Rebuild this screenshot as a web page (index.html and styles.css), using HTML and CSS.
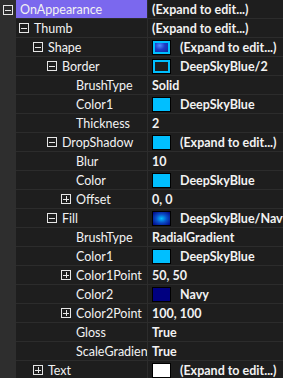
FILE: index.html
```html
<!DOCTYPE html>
<html lang="en">
<head>
  <meta charset="UTF-8" />
  <title>Property Grid</title>
  <link rel="stylesheet" href="styles.css">
</head>
<body>
  <div class="grid">
    <div class="row selected">
      <div class="gutter"><span class="toggle minus"></span></div>
      <div class="name l0">OnAppearance</div>
      <div class="value">(Expand to edit...)</div>
    </div>
    <div class="row">
      <div class="gutter"></div>
      <div class="name l1"><span class="toggle minus"></span>Thumb</div>
      <div class="value">(Expand to edit...)</div>
    </div>
    <div class="row">
      <div class="gutter"></div>
      <div class="name l2"><span class="toggle minus"></span>Shape</div>
      <div class="value"><span class="swatch shape"></span>(Expand to edit...)</div>
    </div>
    <div class="row">
      <div class="gutter"></div>
      <div class="name l3"><span class="toggle minus"></span>Border</div>
      <div class="value"><span class="swatch border"></span>DeepSkyBlue/2</div>
    </div>
    <div class="row">
      <div class="gutter"></div>
      <div class="name l4">BrushType</div>
      <div class="value">Solid</div>
    </div>
    <div class="row">
      <div class="gutter"></div>
      <div class="name l4">Color1</div>
      <div class="value"><span class="swatch sky"></span>DeepSkyBlue</div>
    </div>
    <div class="row">
      <div class="gutter"></div>
      <div class="name l4">Thickness</div>
      <div class="value">2</div>
    </div>
    <div class="row">
      <div class="gutter"></div>
      <div class="name l3"><span class="toggle minus"></span>DropShadow</div>
      <div class="value"><span class="swatch sky"></span>(Expand to edit...)</div>
    </div>
    <div class="row">
      <div class="gutter"></div>
      <div class="name l4">Blur</div>
      <div class="value">10</div>
    </div>
    <div class="row">
      <div class="gutter"></div>
      <div class="name l4">Color</div>
      <div class="value"><span class="swatch sky"></span>DeepSkyBlue</div>
    </div>
    <div class="row">
      <div class="gutter"></div>
      <div class="name l4"><span class="toggle plus"></span>Offset</div>
      <div class="value">0, 0</div>
    </div>
    <div class="row">
      <div class="gutter"></div>
      <div class="name l3"><span class="toggle minus"></span>Fill</div>
      <div class="value"><span class="swatch radial"></span>DeepSkyBlue/Navy</div>
    </div>
    <div class="row">
      <div class="gutter"></div>
      <div class="name l4">BrushType</div>
      <div class="value">RadialGradient</div>
    </div>
    <div class="row">
      <div class="gutter"></div>
      <div class="name l4">Color1</div>
      <div class="value"><span class="swatch sky"></span>DeepSkyBlue</div>
    </div>
    <div class="row">
      <div class="gutter"></div>
      <div class="name l4"><span class="toggle plus"></span>Color1Point</div>
      <div class="value">50, 50</div>
    </div>
    <div class="row">
      <div class="gutter"></div>
      <div class="name l4">Color2</div>
      <div class="value"><span class="swatch navy"></span>Navy</div>
    </div>
    <div class="row">
      <div class="gutter"></div>
      <div class="name l4"><span class="toggle plus"></span>Color2Point</div>
      <div class="value">100, 100</div>
    </div>
    <div class="row">
      <div class="gutter"></div>
      <div class="name l4">Gloss</div>
      <div class="value">True</div>
    </div>
    <div class="row">
      <div class="gutter"></div>
      <div class="name l4">ScaleGradient</div>
      <div class="value">True</div>
    </div>
    <div class="row">
      <div class="gutter"></div>
      <div class="name l2"><span class="toggle plus"></span>Text</div>
      <div class="value"><span class="swatch white"></span>(Expand to edit...)</div>
    </div>
  </div>
</body>
</html>
```

FILE: styles.css
```css
* {
  margin: 0;
  padding: 0;
  box-sizing: border-box;
}

body {
  font-family: 'Lato', 'Noto Sans', sans-serif;
  font-size: 12.5px;
  background: #1e1e1e;
  color: #f2f2f2;
  overflow: hidden;
}

.grid {
  display: flex;
  flex-direction: column;
}

.row {
  display: flex;
  height: 19px;
}

.gutter {
  width: 16px;
  flex: none;
  background: #2e2e2e;
  display: flex;
  align-items: center;
  padding-left: 3px;
}

.name,
.value {
  display: flex;
  align-items: center;
  border-bottom: 1px solid #2c2c2c;
  white-space: nowrap;
  overflow: hidden;
}

.name {
  width: 131px;
  flex: none;
}

.value {
  flex: 1;
  border-left: 1px solid #2c2c2c;
  padding-left: 4px;
  font-weight: bold;
}

.selected .name {
  background: #7b68ee;
}

.l0 { padding-left: 4px; }
.l1 { padding-left: 3px; }
.l2 { padding-left: 17px; }
.l3 { padding-left: 31px; }
.l4 { padding-left: 60px; }

.l4 .toggle {
  margin-left: -15px;
}

.toggle {
  width: 10px;
  height: 10px;
  border: 1px solid #e6e6e6;
  position: relative;
  flex: none;
  margin-right: 5px;
}

.toggle::before,
.toggle::after {
  content: '';
  position: absolute;
  background: #e6e6e6;
}

.toggle::before {
  left: 1px;
  right: 1px;
  top: 4px;
  height: 1px;
}

.plus::after {
  top: 1px;
  bottom: 1px;
  left: 4px;
  width: 1px;
}

.gutter .toggle {
  margin-right: 0;
}

.swatch {
  width: 19px;
  height: 15px;
  flex: none;
  border: 1px solid #000;
  margin-right: 9px;
}

.sky {
  background: #00bfff;
}

.navy {
  background: #000080;
}

.white {
  background: #fff;
}

.border {
  background: #1e1e1e;
  box-shadow: inset 0 0 0 2px #00bfff;
}

.shape {
  background: radial-gradient(ellipse at 40% 35%, #4f8cff 0%, #1d3fc8 35%, #0a1a8a 100%);
  box-shadow: inset 0 0 0 2px #00bfff;
}

.radial {
  background: radial-gradient(ellipse at 50% 50%, #00bfff 0%, #0a50c8 45%, #000080 100%);
}
```
